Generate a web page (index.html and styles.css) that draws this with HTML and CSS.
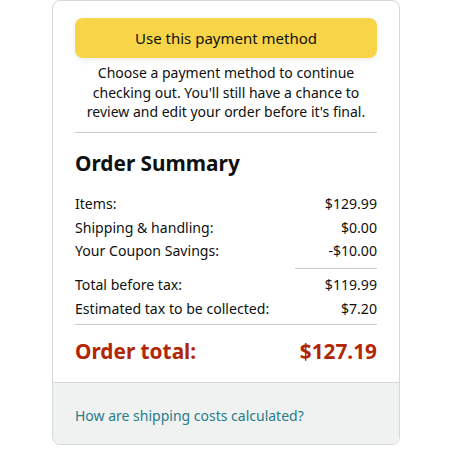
FILE: index.html
```html
<!DOCTYPE html>
<html>
<head>
<meta charset="utf-8">
<link rel="stylesheet" href="styles.css">
</head>
<body>
<div class="card">
  <div class="main">
    <button class="btn">Use this payment method</button>
    <p class="note">Choose a payment method to continue checking out. You'll still have a chance to review and edit your order before it's final.</p>
    <hr class="sep">
    <h2 class="title">Order Summary</h2>
    <div class="rows">
      <div class="row"><span>Items:</span><span>$129.99</span></div>
      <div class="row"><span>Shipping &amp; handling:</span><span>$0.00</span></div>
      <div class="row"><span>Your Coupon Savings:</span><span>-$10.00</span></div>
      <div class="subline"></div>
      <div class="row"><span>Total before tax:</span><span>$119.99</span></div>
      <div class="row"><span>Estimated tax to be collected:</span><span>$7.20</span></div>
    </div>
    <hr class="sep2">
    <div class="total"><span>Order total:</span><span>$127.19</span></div>
  </div>
  <div class="foot"><a class="link" href="#">How are shipping costs calculated?</a></div>
</div>
</body>
</html>
```
FILE: styles.css
```css
html, body { margin: 0; padding: 0; background: #fff; }
body { font-family: "Noto Sans", "Liberation Sans", sans-serif; color: #0F1111; }
.card {
  margin-left: 52px;
  width: 346px;
  height: 443px;
  border: 1px solid #D5D9D9;
  border-radius: 8px;
  overflow: hidden;
  display: flex;
  flex-direction: column;
}
.main { padding: 17px 22px 0 22px; flex: 1; }
.btn {
  display: block;
  width: 100%;
  height: 40px;
  border: none;
  border-radius: 8px;
  background: #F7D448;
  box-shadow: 0 2px 5px rgba(213,217,217,0.5);
  font-family: inherit;
  font-size: 15px;
  color: #0F1111;
  padding: 0;
}
.note {
  margin: 5px 0 0;
  font-size: 14px;
  line-height: 19.5px;
  text-align: center;
}
.sep { margin: 10px 0 0; border: none; border-top: 1px solid #C9CBCB; height: 0; }
.title { margin: 16px 0 0; font-size: 20.8px; line-height: 28px; font-weight: 700; }
.rows { margin-top: 15.5px; font-size: 14.1px; line-height: 19px; }
.row { display: flex; justify-content: space-between; padding: 2px 0 2.5px; }
.subline { margin: 5px 0 4.5px auto; width: 82px; border-top: 1px solid #C9CBCB; }
.sep2 { margin: 4px 0 0; border: none; border-top: 1px solid #C9CBCB; height: 0; }
.total {
  display: flex; justify-content: space-between;
  margin-top: 12px;
  color: #B12704; font-weight: 700; font-size: 20.8px; line-height: 28px;
}
.foot {
  height: 57px;
  background: #F0F2F2;
  border-top: 1px solid #D5D9D9;
  padding: 4px 22px 0;
  display: flex; align-items: center;
}
.link { color: #2A7B88; text-decoration: none; font-size: 14px; }
```
